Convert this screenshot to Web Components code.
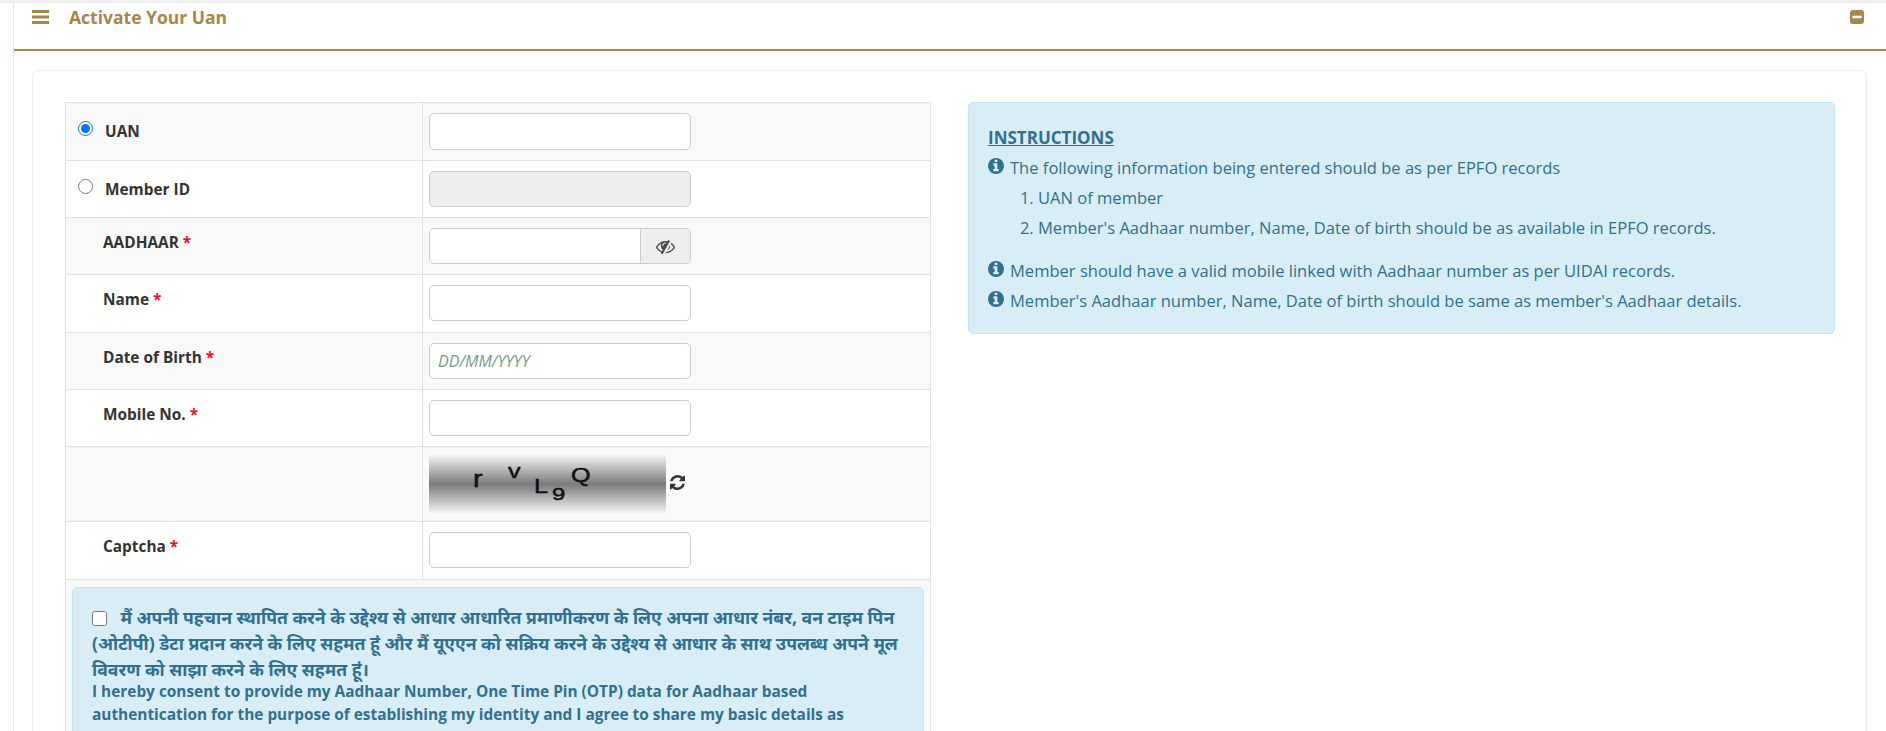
<!DOCTYPE html>
<html><head><meta charset="utf-8">
<style>
html,body{margin:0;height:731px;overflow:hidden;background:#fff}
body{font-family:"Open Sans","Noto Sans",sans-serif}
</style></head><body>
<uan-page></uan-page>
<template id="t-page"><style>
:host{display:block;height:731px;overflow:hidden;--gold:#a88548;color:#333}
.topshade{height:3px;background:linear-gradient(#f4f4f4,#ececec)}
.wrap{margin-left:13px;border-left:1px solid #e6e6e6;height:728px;overflow:hidden}
.head{height:48px;box-sizing:border-box;border-bottom:2px solid var(--gold);display:flex;align-items:flex-start;padding:2px 22px 0 18px;color:var(--gold)}
.head h1{font:700 17.5px/24px "Open Sans",sans-serif;margin:0 0 0 20px;flex:1}
.head svg{display:block;margin-top:5px}
.card{margin:19px 19px 0 18px;border:1px solid #ebebeb;border-radius:6px;padding:31px 31px 0 32px;display:flex;align-items:flex-start;gap:37px;height:800px;box-sizing:border-box}
.left{width:866px;flex:none}
.right{flex:1}
</style>
<div class="topshade"></div>
<div class="wrap">
<div class="head">
<svg width="17" height="15" viewBox="0 0 17 15" fill="currentColor"><rect y="0" width="17" height="3"/><rect y="5.5" width="17" height="3"/><rect y="11" width="17" height="3"/></svg>
<h1>Activate Your Uan</h1>
<svg width="14" height="14" viewBox="128 128 1536 1536" fill="currentColor"><path d="M1408 960v-128q0-26-19-45t-45-19h-896q-26 0-45 19t-19 45v128q0 26 19 45t45 19h896q26 0 45-19t19-45zm256-544v960q0 119-84.500 203.500t-203.500 84.500h-960q-119 0-203.500-84.500t-84.500-203.500v-960q0-119 84.500-203.500t203.500-84.500h960q119 0 203.500 84.500t84.500 203.500z"/></svg>
</div>
<div class="card">
<div class="left"><uan-form></uan-form></div>
<div class="right"><uan-instructions></uan-instructions></div>
</div>
</div>
</template>
<template id="t-form"><style>
:host{display:block;border:1px solid #dee2e6;border-bottom:0;font:700 15.4px/21px "Open Sans",sans-serif;color:#333}
.row{display:grid;grid-template-columns:357px 1fr;border-bottom:1px solid #dee2e6;height:56.200px}
.row:nth-of-type(odd){background:#f9f9f9}
.row.tall{height:74.500px}
.row.first{height:57px}
.l{border-right:1px solid #dee2e6;padding:0 0 0 37px;box-sizing:border-box;position:relative}
.l span{display:block;margin-top:14px}
.l.radio{padding-left:39px}
.l.radio span{margin-top:18px}
.rd{position:absolute;left:12px;top:18px;margin:0;width:15px;height:15px}
.l u{text-decoration:none;color:#e8112d}
.v{padding:10px 0 0 6px}
.inp{display:block;width:262px;height:36px;box-sizing:border-box;border:1px solid #ccc;border-radius:5px;background:#fff}
.inp.dis{background:#eee}
.ph{font:italic 400 16px/35px "Open Sans",sans-serif;color:#7a9a8e;padding-left:8px}
.grp{display:flex;width:262px;height:36px;box-sizing:border-box;border:1px solid #ccc;border-radius:5px;overflow:hidden;background:#fff}
.grp i{flex:1}
.grp b{width:49px;background:#eee;border-left:1px solid #ccc;display:flex;align-items:center;justify-content:center}
.cap{padding-top:6px;display:flex;align-items:flex-start;gap:4px;box-sizing:border-box}
.cap svg{margin-top:22px}
.img{width:237px;height:62px;background:linear-gradient(#fdfdfd 0%,#7b7b7b 50%,#fbfbfb 100%);position:relative;font:400 21px/1 "Liberation Sans",sans-serif;-webkit-text-stroke:.5px #111;color:#111;overflow:hidden;flex:none}
.img span{position:absolute;transform-origin:0 0;transform:scaleX(1.2)}
</style>
<div class="row first"><div class="l radio"><input class="rd" type="radio" name="a" checked><span>UAN</span></div><div class="v"><div class="inp" style="height:37px"></div></div></div>
<div class="row"><div class="l radio"><input class="rd" type="radio" name="a"><span>Member ID</span></div><div class="v"><div class="inp dis"></div></div></div>
<div class="row"><div class="l"><span>AADHAAR <u>*</u></span></div><div class="v"><div class="grp"><i></i><b><svg width="19" height="19" viewBox="0 0 1792 1792" fill="#4d4d4d"><path d="M555 1335l78-141q-87-63-136-159t-49-203q0-121 61-225-229 117-381 353 167 258 427 375zm389-759q0-20-14-34t-34-14q-125 0-214.500 89.500t-89.500 214.500q0 20 14 34t34 14 34-14 14-34q0-86 61-147t147-61q20 0 34-14t14-34zm363-191q0 7-1 9-106 189-316 567t-315 566l-49 89q-10 16-28 16-12 0-134-70-16-10-16-28 0-12 44-87-143-65-263.500-173t-208.500-245q-20-31-20-69t20-69q153-235 380-371t496-136q89 0 180 17l54-97q10-16 28-16 5 0 18 6t31 15.500 33 18.500 31.500 18.500 19.500 11.500q16 10 16 27zm37 447q0 139-79 253.500t-209 164.500l280-502q8 45 8 84zm448 128q0 35-20 69-39 64-109 145-150 172-347.500 267t-419.500 95l74-132q212-18 392.500-137t301.500-307q-115-179-282-294l63-112q95 64 182.500 153t144.500 184q20 34 20 69z"/></svg></b></div></div></div>
<div class="row"><div class="l"><span>Name <u>*</u></span></div><div class="v"><div class="inp"></div></div></div>
<div class="row"><div class="l"><span>Date of Birth <u>*</u></span></div><div class="v"><div class="inp ph">DD/MM/YYYY</div></div></div>
<div class="row"><div class="l"><span>Mobile No. <u>*</u></span></div><div class="v"><div class="inp"></div></div></div>
<div class="row tall"><div class="l"></div><div class="v cap"><div class="img"><span style="left:44px;top:14px;font-size:24px">r</span><span style="left:79px;top:7px">v</span><span style="left:105px;top:22px">L</span><span style="left:123px;top:33px;font-size:17px;transform:scaleX(1.4)">9</span><span style="left:142px;top:11px">Q</span></div><svg width="15" height="15" viewBox="128 128 1536 1536" fill="#333"><path d="M1639 1056q0 5-1 7-64 268-268 434.500t-478 166.500q-146 0-282.500-55t-243.500-157l-129 129q-19 19-45 19t-45-19-19-45v-448q0-26 19-45t45-19h448q26 0 45 19t19 45-19 45l-137 137q71 66 161 102t187 36q134 0 250-65t186-179q11-17 53-117 8-23 30-23h192q13 0 22.500 9.500t9.500 22.500zm25-800v448q0 26-19 45t-45 19h-448q-26 0-45-19t-19-45 19-45l138-138q-148-137-349-137-134 0-250 65t-186 179q-11 17-53 117-8 23-30 23h-199q-13 0-22.500-9.500t-9.500-22.500v-7q65-268 270-434.500t480-166.500q146 0 284 55.500t245 156.500l130-129q19-19 45-19t45 19 19 45z"/></svg></div></div>
<div class="row"><div class="l"><span>Captcha <u>*</u></span></div><div class="v"><div class="inp"></div></div></div>
<div class="notice" style="padding:7px 6px 0;background:#f9f9f9"><uan-consent></uan-consent></div>
</template>
<template id="t-consent"><style>
:host{display:block;background:#d9edf7;border:1px solid #bce8f1;border-radius:5px;padding:16px 19px 0 19px;color:#31708f;height:160px}
.hi{font:700 17.6px/26px "Noto Sans",sans-serif;margin:0}
.en{font:700 15.4px/23px "Open Sans",sans-serif;margin:-2px 0 0}
input{margin:0 9px 0 0;vertical-align:-2px;width:15px;height:15px}
</style>
<p class="hi"><input type="checkbox"> मैं अपनी पहचान स्थापित करने के उद्देश्य से आधार आधारित प्रमाणीकरण के लिए अपना आधार नंबर, वन टाइम पिन (ओटीपी) डेटा प्रदान करने के लिए सहमत हूं और मैं यूएएन को सक्रिय करने के उद्देश्य से आधार के साथ उपलब्ध अपने मूल विवरण को साझा करने के लिए सहमत हूं।</p>
<p class="en">I hereby consent to provide my Aadhaar Number, One Time Pin (OTP) data for Aadhaar based authentication for the purpose of establishing my identity and I agree to share my basic details as</p>
</template>
<template id="t-instr"><style>
:host{display:block;background:#d9edf7;border:1px solid #bce8f1;border-radius:5px;padding:20px 19px 19px 19px;color:#31708f;font:400 16.550px/30px "Open Sans",sans-serif;height:232px;box-sizing:border-box}
h4{font:700 17px/30px "Open Sans",sans-serif;text-decoration:underline;margin:0}
p{margin:0;display:flex;align-items:flex-start;gap:6px}
ol{margin:0 0 13px;padding-left:50px}
</style>
<h4>INSTRUCTIONS</h4>
<p><uan-info></uan-info>The following information being entered should be as per EPFO records</p>
<ol><li>UAN of member</li><li>Member's Aadhaar number, Name, Date of birth should be as available in EPFO records.</li></ol>
<p><uan-info></uan-info>Member should have a valid mobile linked with Aadhaar number as per UIDAI records.</p>
<p><uan-info></uan-info>Member's Aadhaar number, Name, Date of birth should be same as member's Aadhaar details.</p>
</template>
<template id="t-info"><style>:host{display:block;flex:none;margin-top:5px}svg{display:block}</style>
<svg width="16" height="16" viewBox="128 128 1536 1536" fill="#31708f"><path d="M1152 1376v-160q0-14-9-23t-23-9h-96v-512q0-14-9-23t-23-9h-320q-14 0-23 9t-9 23v160q0 14 9 23t23 9h96v320h-96q-14 0-23 9t-9 23v160q0 14 9 23t23 9h448q14 0 23-9t9-23zm-128-896v-160q0-14-9-23t-23-9h-192q-14 0-23 9t-9 23v160q0 14 9 23t23 9h192q14 0 23-9t9-23zm640 416q0 209-103 385.500t-279.500 279.500-385.500 103-385.500-103-279.500-279.500-103-385.500 103-385.500 279.500-279.500 385.500-103 385.500 103 279.500 279.500 103 385.500z"/></svg>
</template>
<script>
function def(name,id){customElements.define(name,class extends HTMLElement{constructor(){super();this.attachShadow({mode:"open"}).appendChild(document.getElementById(id).content.cloneNode(true));}});}
def("uan-info","t-info");def("uan-consent","t-consent");def("uan-instructions","t-instr");def("uan-form","t-form");def("uan-page","t-page");
</script>
</body></html>
